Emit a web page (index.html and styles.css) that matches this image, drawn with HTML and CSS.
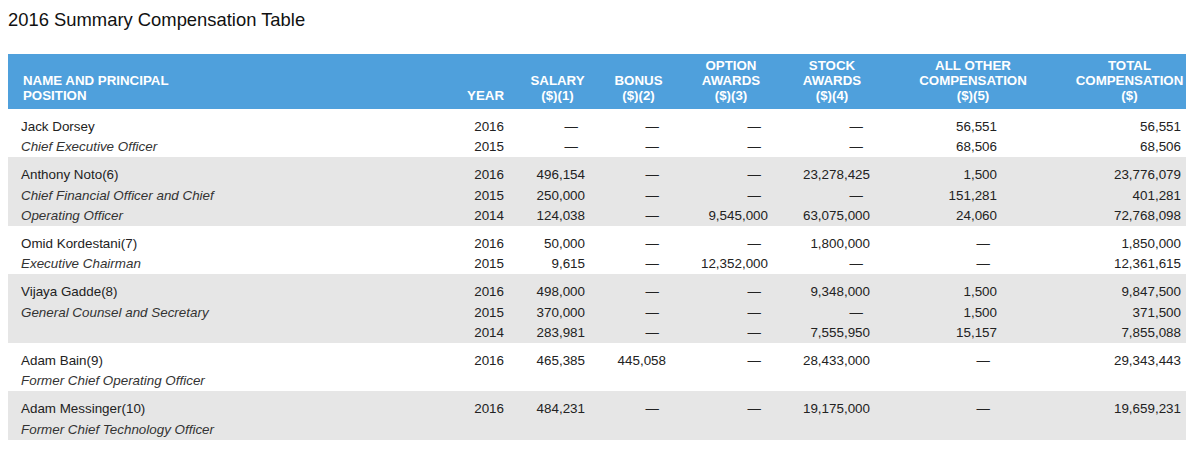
FILE: index.html
```html
<!DOCTYPE html>
<html lang="en">
<head>
<meta charset="utf-8">
<title>2016 Summary Compensation Table</title>
<link rel="stylesheet" href="styles.css">
</head>
<body>
<div class="page">
  <h1 class="title">2016 Summary Compensation Table</h1>
  <table class="comp">
    <colgroup>
      <col class="c-name"><col class="c-year"><col class="c-sal"><col class="c-bon"><col class="c-opt"><col class="c-stk"><col class="c-oth"><col class="c-tot">
    </colgroup>
    <thead>
      <tr>
        <th>NAME AND PRINCIPAL<br>POSITION</th>
        <th>YEAR</th>
        <th>SALARY<br>($)(1)</th>
        <th>BONUS<br>($)(2)</th>
        <th>OPTION<br>AWARDS<br>($)(3)</th>
        <th>STOCK<br>AWARDS<br>($)(4)</th>
        <th>ALL OTHER<br>COMPENSATION<br>($)(5)</th>
        <th>TOTAL<br>COMPENSATION<br>($)</th>
      </tr>
    </thead>
    <tbody>
      <tr>
        <td><div class="nm">Jack Dorsey</div><div class="pos">Chief Executive Officer</div></td>
        <td><div>2016</div><div>2015</div></td>
        <td><div class="dash">—</div><div class="dash">—</div></td>
        <td><div class="dash">—</div><div class="dash">—</div></td>
        <td><div class="dash">—</div><div class="dash">—</div></td>
        <td><div class="dash">—</div><div class="dash">—</div></td>
        <td><div>56,551</div><div>68,506</div></td>
        <td><div>56,551</div><div>68,506</div></td>
      </tr>
      <tr>
        <td><div class="nm">Anthony Noto(6)</div><div class="pos">Chief Financial Officer and Chief</div><div class="pos">Operating Officer</div></td>
        <td><div>2016</div><div>2015</div><div>2014</div></td>
        <td><div>496,154</div><div>250,000</div><div>124,038</div></td>
        <td><div class="dash">—</div><div class="dash">—</div><div class="dash">—</div></td>
        <td><div class="dash">—</div><div class="dash">—</div><div>9,545,000</div></td>
        <td><div>23,278,425</div><div class="dash">—</div><div>63,075,000</div></td>
        <td><div>1,500</div><div>151,281</div><div>24,060</div></td>
        <td><div>23,776,079</div><div>401,281</div><div>72,768,098</div></td>
      </tr>
      <tr>
        <td><div class="nm">Omid Kordestani(7)</div><div class="pos">Executive Chairman</div></td>
        <td><div>2016</div><div>2015</div></td>
        <td><div>50,000</div><div>9,615</div></td>
        <td><div class="dash">—</div><div class="dash">—</div></td>
        <td><div class="dash">—</div><div>12,352,000</div></td>
        <td><div>1,800,000</div><div class="dash">—</div></td>
        <td><div class="dash">—</div><div class="dash">—</div></td>
        <td><div>1,850,000</div><div>12,361,615</div></td>
      </tr>
      <tr>
        <td><div class="nm">Vijaya Gadde(8)</div><div class="pos">General Counsel and Secretary</div></td>
        <td><div>2016</div><div>2015</div><div>2014</div></td>
        <td><div>498,000</div><div>370,000</div><div>283,981</div></td>
        <td><div class="dash">—</div><div class="dash">—</div><div class="dash">—</div></td>
        <td><div class="dash">—</div><div class="dash">—</div><div class="dash">—</div></td>
        <td><div>9,348,000</div><div class="dash">—</div><div>7,555,950</div></td>
        <td><div>1,500</div><div>1,500</div><div>15,157</div></td>
        <td><div>9,847,500</div><div>371,500</div><div>7,855,088</div></td>
      </tr>
      <tr>
        <td><div class="nm">Adam Bain(9)</div><div class="pos">Former Chief Operating Officer</div></td>
        <td><div>2016</div></td>
        <td><div>465,385</div></td>
        <td><div>445,058</div></td>
        <td><div class="dash">—</div></td>
        <td><div>28,433,000</div></td>
        <td><div class="dash">—</div></td>
        <td><div>29,343,443</div></td>
      </tr>
      <tr>
        <td><div class="nm">Adam Messinger(10)</div><div class="pos">Former Chief Technology Officer</div></td>
        <td><div>2016</div></td>
        <td><div>484,231</div></td>
        <td><div class="dash">—</div></td>
        <td><div class="dash">—</div></td>
        <td><div>19,175,000</div></td>
        <td><div class="dash">—</div></td>
        <td><div>19,659,231</div></td>
      </tr>
    </tbody>
  </table>
</div>
</body>
</html>
```
FILE: styles.css
```css
html, body {
  margin: 0;
  padding: 0;
  background: #ffffff;
}

body {
  font-family: "Liberation Sans", Arial, sans-serif;
  color: #222222;
}

.page {
  padding: 9px 14px 0 8px;
}

.title {
  margin: 0 0 24px;
  font-size: 18.4px;
  line-height: 21px;
  font-weight: normal;
  color: #111111;
}

.comp {
  width: 1178px;
  table-layout: fixed;
  border-collapse: collapse;
  border-spacing: 0;
  font-size: 13.4px;
}

.c-name { width: 432px; }
.c-year { width: 69px; }
.c-sal { width: 97px; }
.c-bon { width: 65px; }
.c-opt { width: 120px; }
.c-stk { width: 82px; }
.c-oth { width: 200px; }
.c-tot { width: 113px; }

.comp thead th {
  background: #4fa0dc;
  color: #ffffff;
  font-weight: bold;
  font-size: 13.3px;
  line-height: 15px;
  vertical-align: bottom;
  text-align: center;
  padding: 4px 0 6px;
  white-space: nowrap;
}

.comp thead th:nth-child(1) {
  text-align: left;
  padding-left: 15px;
}

.comp thead th:nth-child(2) {
  text-align: right;
  padding-right: 5px;
}

.comp tbody td {
  vertical-align: top;
  line-height: 20.2px;
  padding: 8px 0 0;
  text-align: right;
  white-space: nowrap;
}

.comp tbody tr:nth-child(even) td {
  background: #e6e6e6;
}

.comp tbody td:nth-child(1) {
  text-align: left;
  padding-left: 13px;
}

.comp tbody td:nth-child(2) { padding-right: 5px; }
.comp tbody td:nth-child(3) { padding-right: 21px; }
.comp tbody td:nth-child(4) { padding-right: 5px; }
.comp tbody td:nth-child(5) { padding-right: 23px; }
.comp tbody td:nth-child(6) { padding-right: 3px; }
.comp tbody td:nth-child(7) { padding-right: 76px; }
.comp tbody td:nth-child(8) { padding-right: 5px; }

.nm {
  color: #222222;
}

.pos {
  font-style: italic;
  color: #333333;
}

.dash {
  padding-right: 7px;
}
```
